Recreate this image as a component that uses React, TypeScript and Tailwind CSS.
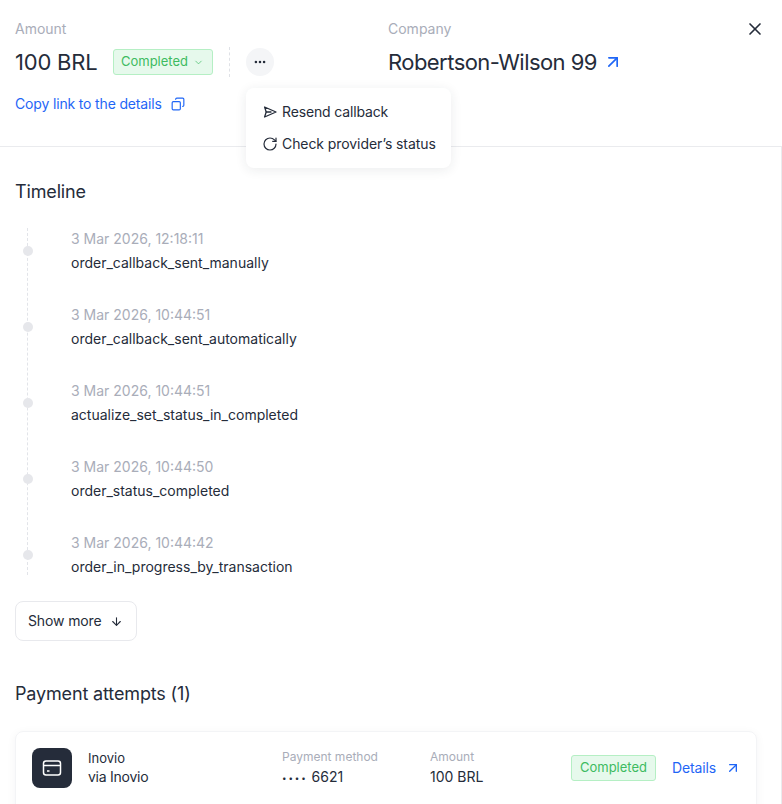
import React from 'react';
import { X, ChevronDown, MoreHorizontal, RotateCw, ArrowUpRight, ArrowDown, Copy } from 'lucide-react';

const events = [
  { date: '3 Mar 2026, 12:18:11', name: 'order_callback_sent_manually' },
  { date: '3 Mar 2026, 10:44:51', name: 'order_callback_sent_automatically' },
  { date: '3 Mar 2026, 10:44:51', name: 'actualize_set_status_in_completed' },
  { date: '3 Mar 2026, 10:44:50', name: 'order_status_completed' },
  { date: '3 Mar 2026, 10:44:42', name: 'order_in_progress_by_transaction' },
];

const App: React.FC = () => {
  return (
    <div className="w-[782px] h-[804px] overflow-hidden bg-white text-[#252c3a] font-['Inter',sans-serif]">
      {/* Header */}
      <div className="relative h-[147px] border-b border-[#eaebee] pl-[15px] pt-[21px]">
        <div className="flex">
          <div className="w-[373px]">
            <div className="text-sm leading-4 text-[#a9adb9]">Amount</div>
            <div className="mt-[11px] flex items-center h-[28px]">
              <span className="text-[22px] leading-7 tracking-[-0.2px]">100 BRL</span>
              <span className="ml-[15px] flex items-center h-[26px] w-[100px] justify-center gap-[5px] rounded-[3px] border border-[#b5efc4] bg-[#e6f9ec] text-[13px] text-[#3dbb61]">
                Completed
                <ChevronDown size={11} strokeWidth={1.5} />
              </span>
              <span className="ml-4 h-[30px] border-l border-dashed border-[#dfe1e6]" />
              <span className="ml-4 flex h-7 w-7 items-center justify-center rounded-full bg-[#f4f5f7]">
                <MoreHorizontal size={14} strokeWidth={2.4} />
              </span>
            </div>
            <div className="mt-[18px] flex items-center gap-[9px] text-sm leading-5 tracking-[-0.16px] text-[#1f66f6]">
              Copy link to the details
              <Copy size={14} strokeWidth={2} className="-scale-x-100" />
            </div>
          </div>
          <div>
            <div className="text-sm leading-4 text-[#a9adb9]">Company</div>
            <div className="mt-[11px] flex items-center h-[28px] gap-[6px]">
              <span className="text-[22px] leading-7 tracking-[-0.55px]">Robertson-Wilson 99</span>
              <ArrowUpRight size={20} strokeWidth={2} className="text-[#1f66f6]" />
            </div>
          </div>
        </div>
        <X size={20} strokeWidth={2} className="absolute left-[745px] top-[19px]" />

        {/* Dropdown */}
        <div className="absolute left-[246px] top-[88px] z-10 w-[205px] h-[80px] rounded-lg bg-white pl-[16px] pt-[16px] shadow-[0_2px_12px_rgba(30,40,60,0.09)] text-sm">
          <div className="flex items-center gap-[4px] h-4 tracking-[-0.15px]">
            <svg width="16" height="16" viewBox="0 0 16 16" fill="none" stroke="currentColor" strokeWidth="1.3" strokeLinejoin="round" strokeLinecap="round">
              <path d="M2.6 3 14 8 2.6 13 4.2 8Z" />
              <path d="M4.2 8H9" />
            </svg>
            Resend callback
          </div>
          <div className="mt-4 flex items-center gap-[4px] h-4 tracking-[-0.08px]">
            <RotateCw size={16} strokeWidth={1.8} />
            Check provider’s status
          </div>
        </div>
      </div>

      {/* Body */}
      <div className="h-[657px] border-r border-[#eaebee] pl-[15px] pt-[33px] pr-[25px]">
        <h2 className="text-lg leading-6 font-normal tracking-[-0.15px]">Timeline</h2>

        <div className="relative mt-[23px] ml-0">
          <div className="absolute left-[12px] top-[1px] h-[347px] border-l border-dashed border-[#e2e4e9]" />
          {events.map((e) => (
            <div key={e.name + e.date} className="relative h-[76px] pl-[56px] pt-[2px]">
              <span className="absolute left-[8px] top-[19px] h-[10px] w-[10px] rounded-full bg-[#e6e7eb]" />
              <div className="text-sm leading-5 text-[#a9adb9]">{e.date}</div>
              <div className="mt-1 text-sm leading-5">{e.name}</div>
            </div>
          ))}
        </div>

        <button className="mt-[-6px] flex h-10 w-[122px] items-center gap-[8px] rounded-lg border border-[#e8e9ed] pl-[12px] text-sm tracking-[-0.12px] bg-white">
          Show more
          <ArrowDown size={13} strokeWidth={2} />
        </button>

        <h2 className="mt-[41px] text-lg leading-6 font-normal tracking-[-0.15px]">Payment attempts (1)</h2>

        <div className="mt-[25px] flex h-[90px] w-[742px] rounded-lg border border-[#f3f4f6] shadow-[0_2px_10px_rgba(30,40,60,0.05)] pl-[16px] pt-[16px]">
          <div className="flex h-10 w-10 items-center justify-center rounded-lg bg-[#252c3a]">
            <svg width="20" height="20" viewBox="0 0 20 20" fill="none" stroke="white" strokeWidth="1.5">
              <rect x="1.5" y="3" width="17" height="14" rx="2.5" />
              <path d="M1.5 7.5h17" />
              <path d="M5 13h2.5" />
            </svg>
          </div>
          <div className="ml-4 w-[194px] text-sm leading-5">
            <div className="text-[13px]">Inovio</div>
            <div className="-mt-px tracking-[-0.25px]">via Inovio</div>
          </div>
          <div className="w-[148px] -mt-[1px]">
            <div className="text-xs leading-5 text-[#a9adb9]">Payment method</div>
            <div className="text-sm leading-5"><span className="text-[8px] tracking-[1.9px] align-[1px]">••••</span> 6621</div>
          </div>
          <div className="w-[141px] -mt-[1px]">
            <div className="text-xs leading-5 text-[#a9adb9]">Amount</div>
            <div className="text-sm leading-5">100 BRL</div>
          </div>
          <span className="flex h-[26px] w-[85px] mt-[7px] items-center justify-center rounded-[3px] border border-[#b5efc4] bg-[#e6f9ec] text-[13px] text-[#3dbb61]">Completed</span>
          <span className="ml-4 mt-[10px] flex h-5 items-center gap-[9px] text-sm tracking-[-0.12px] text-[#1f66f6]">
            Details
            <ArrowUpRight size={16} strokeWidth={2} />
          </span>
        </div>
      </div>
    </div>
  );
};

export default App;
